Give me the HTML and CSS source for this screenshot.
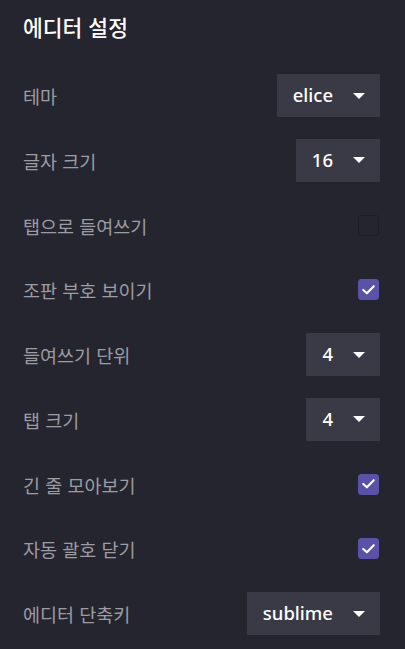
FILE: index.html
```html
<!DOCTYPE html>
<html lang="ko">
<head>
<meta charset="utf-8">
<link rel="stylesheet" href="styles.css">
</head>
<body>
<div class="panel">
  <h1 class="title">에디터 설정</h1>
  <div class="rows">
    <div class="row"><span class="label">테마</span><div class="select"><span>elice</span><i class="caret"></i></div></div>
    <div class="row"><span class="label">글자 크기</span><div class="select"><span>16</span><i class="caret"></i></div></div>
    <div class="row"><span class="label">탭으로 들여쓰기</span><span class="check"></span></div>
    <div class="row"><span class="label">조판 부호 보이기</span><span class="check on"><svg viewBox="0 0 22 22"><path d="M5.5 11.5 L9.3 15 L16.5 7.5" /></svg></span></div>
    <div class="row"><span class="label">들여쓰기 단위</span><div class="select"><span>4</span><i class="caret"></i></div></div>
    <div class="row"><span class="label">탭 크기</span><div class="select"><span>4</span><i class="caret"></i></div></div>
    <div class="row"><span class="label">긴 줄 모아보기</span><span class="check on"><svg viewBox="0 0 22 22"><path d="M5.5 11.5 L9.3 15 L16.5 7.5" /></svg></span></div>
    <div class="row"><span class="label">자동 괄호 닫기</span><span class="check on"><svg viewBox="0 0 22 22"><path d="M5.5 11.5 L9.3 15 L16.5 7.5" /></svg></span></div>
    <div class="row"><span class="label">에디터 단축키</span><div class="select"><span>sublime</span><i class="caret"></i></div></div>
  </div>
</div>
</body>
</html>
```
FILE: styles.css
```css
html, body {
  margin: 0;
  padding: 0;
  background: #25252f;
}
body {
  font-family: "Noto Sans", "Noto Sans CJK KR", sans-serif;
  width: 405px;
  height: 649px;
  overflow: hidden;
}
.panel {
  padding: 11px 25px 0 23px;
}
.title {
  margin: 0;
  font-family: "Noto Sans CJK KR", sans-serif;
  font-size: 21.5px;
  font-weight: 500;
  color: #ffffff;
  line-height: 32px;
  height: 32px;
}
.rows {
  margin-top: 31px;
  display: flex;
  flex-direction: column;
  gap: 21.75px;
}
.row {
  height: 43px;
  display: flex;
  align-items: center;
  justify-content: space-between;
}
.label {
  font-family: "Noto Sans CJK KR", sans-serif;
  font-size: 18.5px;
  color: #9c9ca3;
  padding-top: 1px;
}
.select {
  height: 43px;
  background: #3a3a47;
  display: flex;
  align-items: center;
  gap: 20px;
  padding: 0 15px 0 16px;
  color: #ffffff;
  font-family: "Noto Sans", sans-serif;
  font-size: 18.5px;
  font-weight: 500;
  box-sizing: border-box;
}
.select span {
  padding-bottom: 2px;
}
.caret {
  width: 0;
  height: 0;
  border-left: 6px solid transparent;
  border-right: 6px solid transparent;
  border-top: 6px solid #ffffff;
}
.check {
  width: 21px;
  height: 21px;
  box-sizing: border-box;
  border: 1.5px solid #1d1e24;
  border-radius: 3px;
  margin-right: 1px;
  display: flex;
}
.check.on {
  background: #5a51a8;
  border-color: #5a51a8;
}
.check svg {
  margin: -1.5px;
  width: 21px;
  height: 21px;
}
.check path {
  fill: none;
  stroke: #ffffff;
  stroke-width: 2.2;
  stroke-linecap: round;
  stroke-linejoin: round;
}
```
